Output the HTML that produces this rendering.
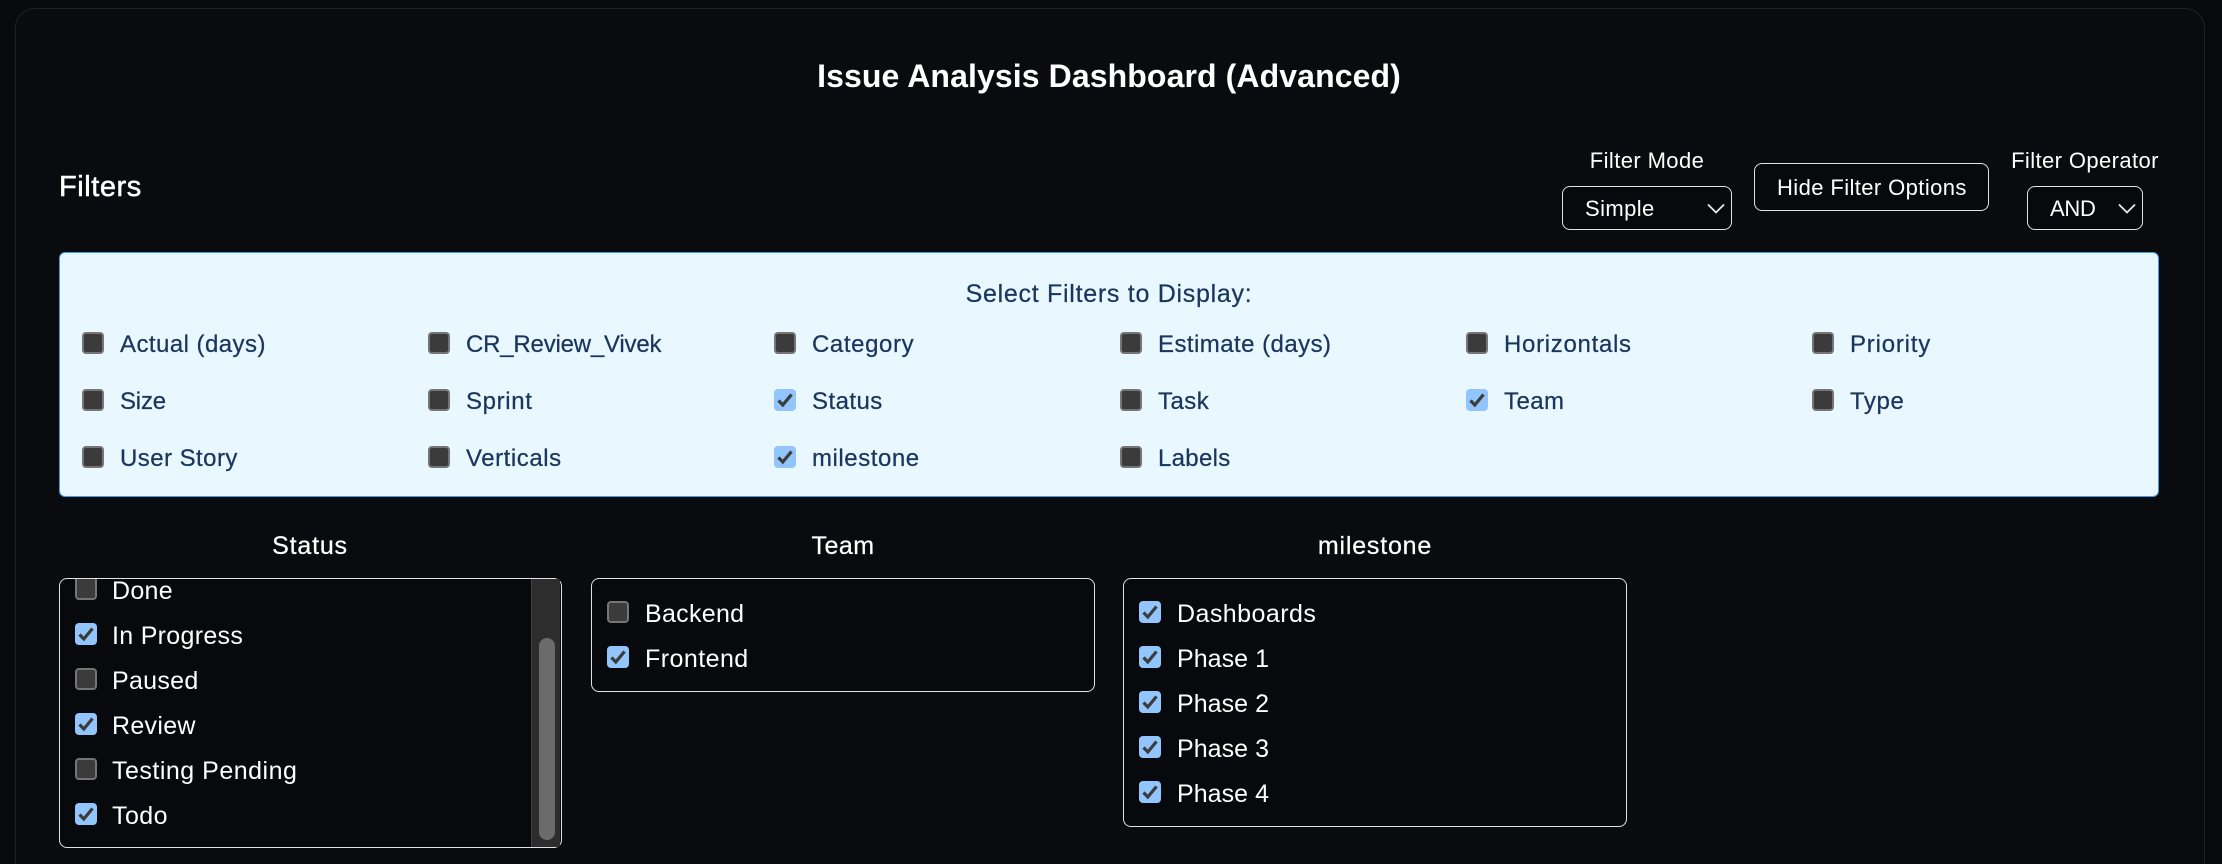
<!DOCTYPE html>
<html lang="en"><head><meta charset="utf-8"><title>Issue Analysis Dashboard (Advanced)</title>
<style>
*{box-sizing:border-box}
html,body{margin:0;padding:0;width:2222px;height:864px;overflow:hidden;background:#08090c;font-family:"Liberation Sans",Arial,sans-serif;color:#fff}
.root{position:relative;width:2222px;height:864px;overflow:hidden;background:#08090c}
.card{position:absolute;left:15px;top:8px;width:2190px;height:880px;background:#0a0b0e;border:1px solid #202124;border-radius:20px}
.t{position:absolute;height:40px;line-height:40px;white-space:nowrap;font-size:24px;letter-spacing:.45px}
.l{font-size:25px;letter-spacing:.3px}
.c{transform:translateX(-50%)}
.box{position:absolute;border:1.5px solid #e2e2e2;border-radius:8px;background:#08090c}
.panel{position:absolute;left:59px;top:252px;width:2100px;height:245px;background:#e9f7ff;border:1.5px solid #3b9be6;border-radius:6px}
.d{color:#1b365d;-webkit-text-stroke:.25px #1b365d}
.cb{position:absolute;width:22px;height:22px;border-radius:4px;background:#3b3b3b;border:2px solid #757575}
.cb.on{background:#93c5fd;border:0}
.cb svg{display:block;position:absolute;left:0;top:0}
.sb{position:absolute;left:531px;top:579px;width:29px;height:268px;background:#2d2d2d;border-left:1px solid #3f3f3f}
.th{position:absolute;left:539px;top:638px;width:16px;height:202px;background:#6b6b6b;border-radius:8px}
.ch{position:absolute}
</style></head><body>
<div class="root">
<svg width="0" height="0" style="position:absolute"><defs><path id="k" d="M4.5 11.5L8.8 16L17.5 5.5" fill="none" stroke="#3b3b3b" stroke-width="3.2"/></defs></svg>
<div class="card"></div>
<div class="t c" style="left:1109px;top:56px;font-size:32px;font-weight:bold;letter-spacing:.1px">Issue Analysis Dashboard (Advanced)</div>
<div class="t" style="left:59px;top:167px;font-size:29px;letter-spacing:.55px;-webkit-text-stroke:.5px #fff">Filters</div>

<div class="t c" style="left:1647px;top:141px;font-size:22px;letter-spacing:.4px">Filter Mode</div>
<div class="box" style="left:1562px;top:186px;width:170px;height:44px"></div>
<div class="t" style="left:1585px;top:189px;font-size:22px;letter-spacing:.4px">Simple</div>
<svg class="ch" style="left:1707px;top:203px" width="18" height="11"><path d="M1 1.5L9 9.5L17 1.5" fill="none" stroke="#e8e8e8" stroke-width="1.8"/></svg>
<div class="box" style="left:1754px;top:163px;width:235px;height:48px"></div>
<div class="t" style="left:1777px;top:168px;font-size:22px;letter-spacing:.4px">Hide Filter Options</div>
<div class="t c" style="left:2085px;top:141px;font-size:22px;letter-spacing:.4px">Filter Operator</div>
<div class="box" style="left:2027px;top:186px;width:116px;height:44px"></div>
<div class="t" style="left:2050px;top:189px;font-size:22px;letter-spacing:-.3px">AND</div>
<svg class="ch" style="left:2118px;top:203px" width="18" height="11"><path d="M1 1.5L9 9.5L17 1.5" fill="none" stroke="#e8e8e8" stroke-width="1.8"/></svg>

<div class="panel"></div>
<div class="t c d" style="left:1109px;top:274px;font-size:25px;letter-spacing:.72px">Select Filters to Display:</div>

<div class="cb" style="left:82px;top:332px"></div><div class="t d" style="left:120px;top:325px">Actual (days)</div>
<div class="cb" style="left:428px;top:332px"></div><div class="t d" style="left:466px;top:325px;letter-spacing:-.2px">CR_Review_Vivek</div>
<div class="cb" style="left:774px;top:332px"></div><div class="t d" style="left:812px;top:325px;letter-spacing:.6px">Category</div>
<div class="cb" style="left:1120px;top:332px"></div><div class="t d" style="left:1158px;top:325px">Estimate (days)</div>
<div class="cb" style="left:1466px;top:332px"></div><div class="t d" style="left:1504px;top:325px;letter-spacing:.7px">Horizontals</div>
<div class="cb" style="left:1812px;top:332px"></div><div class="t d" style="left:1850px;top:325px;letter-spacing:.8px">Priority</div>

<div class="cb" style="left:82px;top:389px"></div><div class="t d" style="left:120px;top:382px;letter-spacing:-.2px">Size</div>
<div class="cb" style="left:428px;top:389px"></div><div class="t d" style="left:466px;top:382px;letter-spacing:.65px">Sprint</div>
<div class="cb on" style="left:774px;top:389px"><svg width="22" height="22"><use href="#k"/></svg></div><div class="t d" style="left:812px;top:382px">Status</div>
<div class="cb" style="left:1120px;top:389px"></div><div class="t d" style="left:1158px;top:382px">Task</div>
<div class="cb on" style="left:1466px;top:389px"><svg width="22" height="22"><use href="#k"/></svg></div><div class="t d" style="left:1504px;top:382px">Team</div>
<div class="cb" style="left:1812px;top:389px"></div><div class="t d" style="left:1850px;top:382px;letter-spacing:.6px">Type</div>

<div class="cb" style="left:82px;top:446px"></div><div class="t d" style="left:120px;top:439px">User Story</div>
<div class="cb" style="left:428px;top:446px"></div><div class="t d" style="left:466px;top:439px;letter-spacing:.55px">Verticals</div>
<div class="cb on" style="left:774px;top:446px"><svg width="22" height="22"><use href="#k"/></svg></div><div class="t d" style="left:812px;top:439px;letter-spacing:.55px">milestone</div>
<div class="cb" style="left:1120px;top:446px"></div><div class="t d" style="left:1158px;top:439px;letter-spacing:.3px">Labels</div>

<div class="t c" style="left:310px;top:526px;font-size:25px;letter-spacing:.8px;-webkit-text-stroke:.25px #fff">Status</div>
<div class="t c" style="left:843px;top:526px;font-size:25px;letter-spacing:.45px;-webkit-text-stroke:.25px #fff">Team</div>
<div class="t c" style="left:1375px;top:526px;font-size:25px;letter-spacing:.8px;-webkit-text-stroke:.25px #fff">milestone</div>

<div class="box" style="left:59px;top:578px;width:503px;height:270px"></div>
<div class="sb"></div><div class="th"></div>
<div class="cb" style="left:75px;top:579px;height:21px;border-top:0;border-radius:0 0 4px 4px"></div><div class="t l" style="left:112px;top:571px">Done</div>
<div class="cb on" style="left:75px;top:623px"><svg width="22" height="22"><use href="#k"/></svg></div><div class="t l" style="left:112px;top:616px">In Progress</div>
<div class="cb" style="left:75px;top:668px"></div><div class="t l" style="left:112px;top:661px">Paused</div>
<div class="cb on" style="left:75px;top:713px"><svg width="22" height="22"><use href="#k"/></svg></div><div class="t l" style="left:112px;top:706px">Review</div>
<div class="cb" style="left:75px;top:758px"></div><div class="t l" style="left:112px;top:751px;letter-spacing:.5px">Testing Pending</div>
<div class="cb on" style="left:75px;top:803px"><svg width="22" height="22"><use href="#k"/></svg></div><div class="t l" style="left:112px;top:796px;letter-spacing:.45px">Todo</div>

<div class="box" style="left:591px;top:578px;width:504px;height:114px"></div>
<div class="cb" style="left:607px;top:601px"></div><div class="t l" style="left:645px;top:594px">Backend</div>
<div class="cb on" style="left:607px;top:646px"><svg width="22" height="22"><use href="#k"/></svg></div><div class="t l" style="left:645px;top:639px;letter-spacing:.45px">Frontend</div>

<div class="box" style="left:1123px;top:578px;width:504px;height:249px"></div>
<div class="cb on" style="left:1139px;top:601px"><svg width="22" height="22"><use href="#k"/></svg></div><div class="t l" style="left:1177px;top:594px;letter-spacing:.45px">Dashboards</div>
<div class="cb on" style="left:1139px;top:646px"><svg width="22" height="22"><use href="#k"/></svg></div><div class="t l" style="left:1177px;top:639px;letter-spacing:.05px">Phase 1</div>
<div class="cb on" style="left:1139px;top:691px"><svg width="22" height="22"><use href="#k"/></svg></div><div class="t l" style="left:1177px;top:684px;letter-spacing:.05px">Phase 2</div>
<div class="cb on" style="left:1139px;top:736px"><svg width="22" height="22"><use href="#k"/></svg></div><div class="t l" style="left:1177px;top:729px;letter-spacing:.05px">Phase 3</div>
<div class="cb on" style="left:1139px;top:781px"><svg width="22" height="22"><use href="#k"/></svg></div><div class="t l" style="left:1177px;top:774px;letter-spacing:.05px">Phase 4</div>
</div>
</body></html>
